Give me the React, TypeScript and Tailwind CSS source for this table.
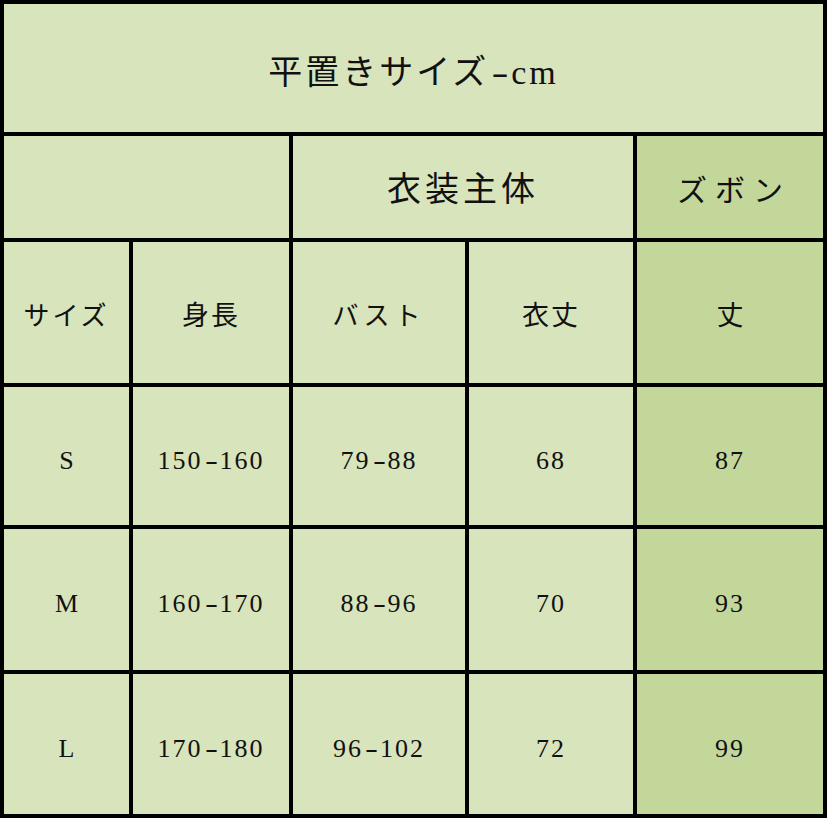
import React from 'react';

// Size chart: flat measurements in cm
const rows = [
  { size: 'S', height: ['150', '160'], bust: ['79', '88'], length: '68', pants: '87' },
  { size: 'M', height: ['160', '170'], bust: ['88', '96'], length: '70', pants: '93' },
  { size: 'L', height: ['170', '180'], bust: ['96', '102'], length: '72', pants: '99' },
];

const font = "font-['Liberation_Serif','Noto_Sans_CJK_JP',serif]";
const light = 'bg-[#d8e4bc]';
const dark = 'bg-[#c4d79b]';
const cell = 'flex items-center justify-center text-[#111]';

const Dash = ({ w }: { w: string }) => (
  <span className={`inline-block ${w} text-center tracking-normal scale-x-[1.5]`}>-</span>
);

const Range = ({ v }: { v: string[] }) => (
  <span>
    {v[0]}
    <Dash w="w-[17px]" />
    {v[1]}
  </span>
);

export default function App() {
  return (
    <div
      className={`${font} grid w-[827px] h-[818px] bg-black p-[4px] gap-[4px] grid-cols-[125px_156px_172px_164px_186px] grid-rows-[128px_102px_141px_138px_141px_140px]`}
    >
      {/* Title */}
      <div className={`${cell} ${light} col-span-5 pt-[8px] text-[34px] tracking-[3px]`}>
        平置きサイズ<Dash w="w-[22px]" />cm
      </div>

      {/* Group headers */}
      <div className={`${light} col-span-2`} />
      <div className={`${cell} ${light} col-span-2 pt-[4px] text-[34px] tracking-[4px]`}>衣装主体</div>
      <div className={`${cell} ${dark} pt-[6px] pl-[8px] text-[30px] tracking-[8px]`}>ズボン</div>

      {/* Column headers */}
      <div className={`${cell} ${light} pt-[8px] text-[26px] tracking-[3px]`}>サイズ</div>
      <div className={`${cell} ${light} pt-[8px] text-[27px] tracking-[2px]`}>身長</div>
      <div className={`${cell} ${light} pt-[8px] text-[26px] tracking-[5px]`}>バスト</div>
      <div className={`${cell} ${light} pt-[8px] text-[27px] tracking-[2px]`}>衣丈</div>
      <div className={`${cell} ${dark} pt-[8px] text-[27px]`}>丈</div>

      {/* Data rows */}
      {rows.map((r) => (
        <React.Fragment key={r.size}>
          <div className={`${cell} ${light} pt-[8px] text-[26px]`}>{r.size}</div>
          <div className={`${cell} ${light} pt-[8px] text-[26px] tracking-[2px]`}>
            <Range v={r.height} />
          </div>
          <div className={`${cell} ${light} pt-[8px] text-[26px] tracking-[2px]`}>
            <Range v={r.bust} />
          </div>
          <div className={`${cell} ${light} pt-[8px] text-[26px] tracking-[2px]`}>{r.length}</div>
          <div className={`${cell} ${dark} pt-[8px] text-[26px] tracking-[2px]`}>{r.pants}</div>
        </React.Fragment>
      ))}
    </div>
  );
}
